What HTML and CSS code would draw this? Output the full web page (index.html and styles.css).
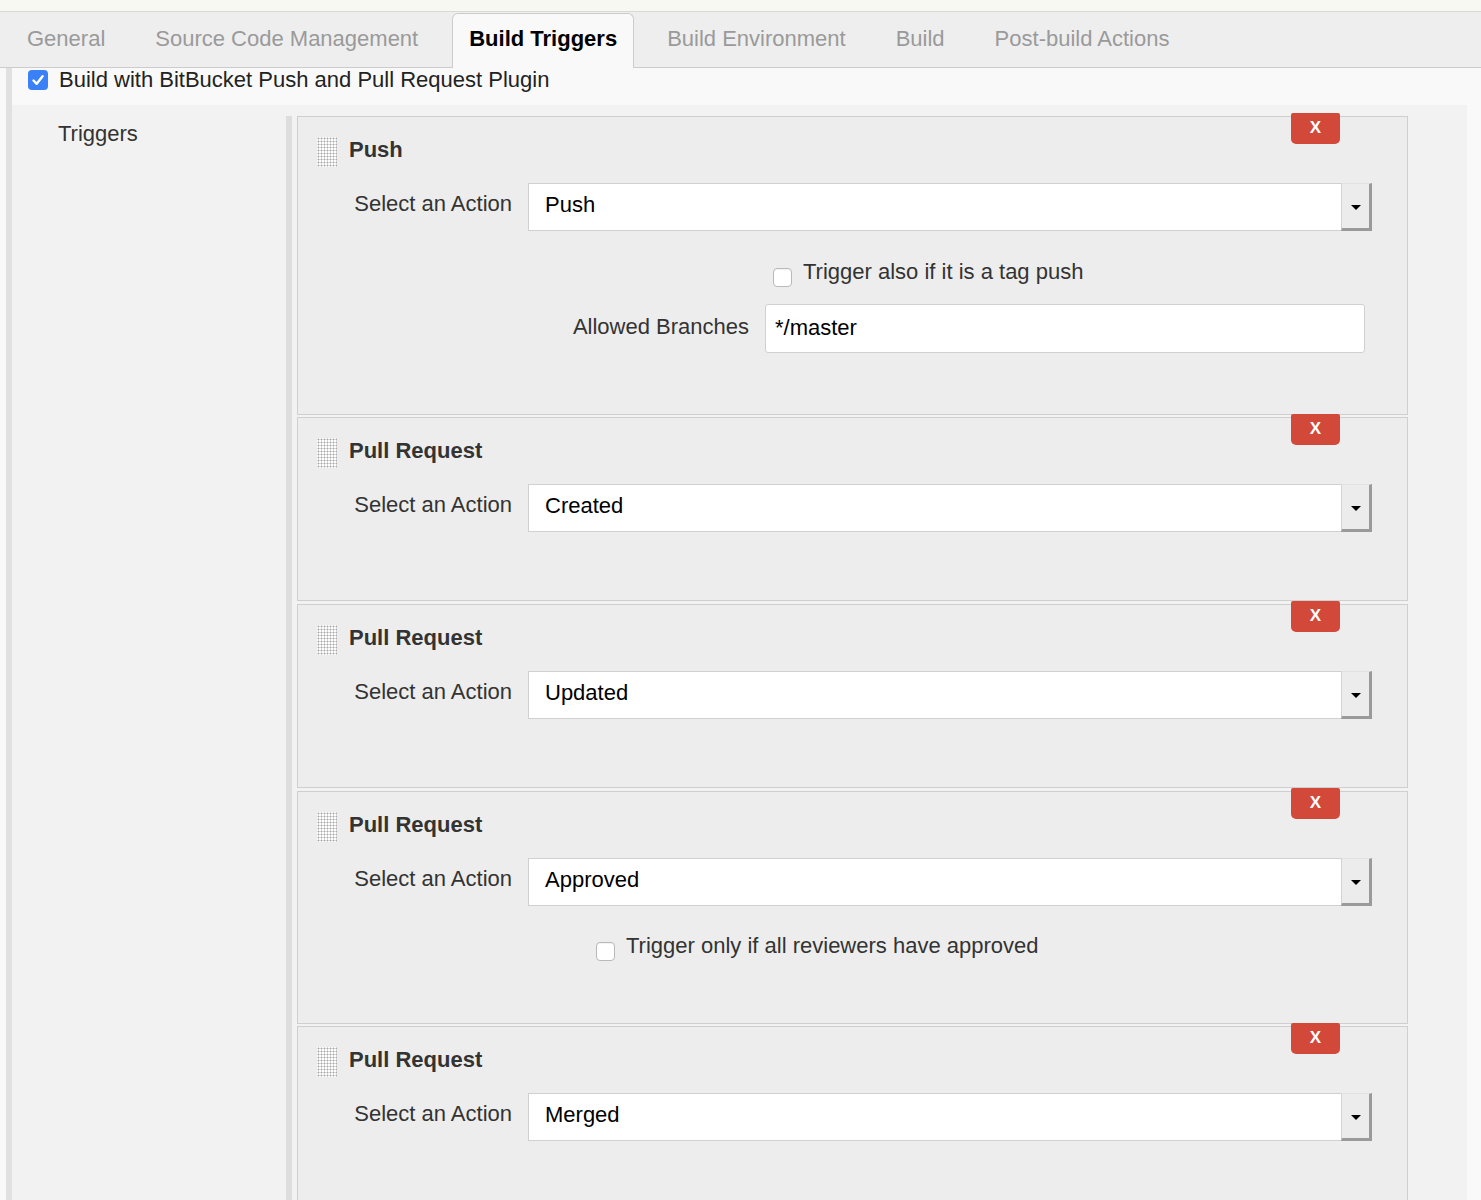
FILE: index.html
```html
<!DOCTYPE html>
<html>
<head>
<meta charset="utf-8">
<link rel="stylesheet" href="styles.css">
</head>
<body>
<div class="topstrip"></div>
<div class="tabbar">
  <div class="tab">General</div>
  <div class="tab">Source Code Management</div>
  <div class="tab active">Build Triggers</div>
  <div class="tab">Build Environment</div>
  <div class="tab">Build</div>
  <div class="tab">Post-build Actions</div>
</div>
<div class="main">
  <div class="plugin-row">
    <span class="cb-checked"><svg width="20" height="20" viewBox="0 0 20 20"><path d="M5.5 10.5 L8.7 13.8 L14.6 6.2" fill="none" stroke="#fff" stroke-width="2.4" stroke-linecap="round" stroke-linejoin="round"/></svg></span>
    <span class="plugin-text">Build with BitBucket Push and Pull Request Plugin</span>
  </div>
  <div class="section">
    <div class="sec-label">Triggers</div>
    <div class="sec-body">

      <div class="box box-push">
        <div class="del">X</div>
        <div class="hdr"><span class="handle"></span><span class="title">Push</span></div>
        <div class="row">
          <div class="label">Select an Action</div>
          <div class="select"><span class="sel-text">Push</span><span class="sel-btn"><span class="tri"></span></span></div>
        </div>
        <div class="cbrow cbrow-push">
          <span class="cb"></span><span class="cb-text">Trigger also if it is a tag push</span>
        </div>
        <div class="row2">
          <div class="label2">Allowed Branches</div>
          <div class="input">*/master</div>
        </div>
      </div>

      <div class="box">
        <div class="del">X</div>
        <div class="hdr"><span class="handle"></span><span class="title">Pull Request</span></div>
        <div class="row">
          <div class="label">Select an Action</div>
          <div class="select"><span class="sel-text">Created</span><span class="sel-btn"><span class="tri"></span></span></div>
        </div>
      </div>

      <div class="box">
        <div class="del">X</div>
        <div class="hdr"><span class="handle"></span><span class="title">Pull Request</span></div>
        <div class="row">
          <div class="label">Select an Action</div>
          <div class="select"><span class="sel-text">Updated</span><span class="sel-btn"><span class="tri"></span></span></div>
        </div>
      </div>

      <div class="box box-approved">
        <div class="del">X</div>
        <div class="hdr"><span class="handle"></span><span class="title">Pull Request</span></div>
        <div class="row">
          <div class="label">Select an Action</div>
          <div class="select"><span class="sel-text">Approved</span><span class="sel-btn"><span class="tri"></span></span></div>
        </div>
        <div class="cbrow cbrow-approved">
          <span class="cb"></span><span class="cb-text">Trigger only if all reviewers have approved</span>
        </div>
      </div>

      <div class="box">
        <div class="del">X</div>
        <div class="hdr"><span class="handle"></span><span class="title">Pull Request</span></div>
        <div class="row">
          <div class="label">Select an Action</div>
          <div class="select"><span class="sel-text">Merged</span><span class="sel-btn"><span class="tri"></span></span></div>
        </div>
      </div>

    </div>
  </div>
</div>
</body>
</html>
```

FILE: styles.css
```css
* { box-sizing: border-box; }
html, body {
  margin: 0;
  padding: 0;
  background: #f9f9f9;
  font-family: "Liberation Sans", Arial, Helvetica, sans-serif;
  font-size: 22px;
  color: #333;
  overflow: hidden;
}
.topstrip {
  height: 12px;
  background: #f6f8f1;
  border-bottom: 1px solid #d9d9d9;
}
.tabbar {
  display: flex;
  align-items: flex-end;
  height: 56px;
  background: #eeeeee;
  border-bottom: 1px solid #cccccc;
  padding-left: 10px;
}
.tab {
  height: 55px;
  line-height: 53px;
  padding: 0 17px;
  margin-right: 16px;
  color: #9a9a9a;
  font-size: 22px;
  white-space: nowrap;
}
.tab.active {
  height: 55px;
  line-height: 49px;
  padding: 0 16px;
  margin-left: 1px;
  margin-bottom: -1px;
  background: #f9f9f9;
  border: 1px solid #cccccc;
  border-bottom: none;
  border-radius: 6px 6px 0 0;
  color: #000;
  font-weight: bold;
}
.main {
  margin-left: 6px;
  border-left: 6px solid #e1e1e1;
  min-height: 1200px;
}
.plugin-row {
  display: flex;
  align-items: flex-start;
  height: 37px;
  padding-left: 16px;
}
.cb-checked {
  display: block;
  width: 20px;
  height: 20px;
  margin-top: 2px;
  border-radius: 4px;
  background: #3a80f6;
}
.cb-checked svg { display: block; }
.plugin-text {
  margin-left: 11px;
  color: #222;
  line-height: 24px;
}
.section {
  display: flex;
  background: #f2f2f2;
  margin-right: 14px;
  padding-top: 11px;
  min-height: 1100px;
}
.sec-label {
  width: 274px;
  flex: none;
  padding-left: 46px;
  padding-top: 6px;
  line-height: 24px;
  color: #333;
}
.sec-body {
  flex: 1;
  border-left: 6px solid #dddddd;
  padding-left: 5px;
  padding-right: 59px;
}
.box {
  position: relative;
  border: 1px solid #cfcfcf;
  background: #ededed;
  padding: 20px 0 68px 0;
  margin-bottom: 3px;
}
.box-push { padding-bottom: 61px; margin-bottom: 2px; }
.box-approved { padding-bottom: 62px; margin-bottom: 2px; }
.del {
  position: absolute;
  top: -4px;
  right: 67px;
  width: 49px;
  height: 31px;
  background: #d24939;
  border-radius: 2px 2px 5px 5px;
  color: #fff;
  font-weight: bold;
  font-size: 17px;
  line-height: 29px;
  text-align: center;
}
.hdr {
  display: flex;
  align-items: center;
  height: 30px;
  padding-left: 19px;
}
.handle {
  display: block;
  width: 20px;
  height: 30px;
  background-color: #fdfdfd;
  background-image: radial-gradient(circle at 1.5px 1.5px, #aaaaaa 0.85px, transparent 1.15px);
  background-size: 3px 3px;
}
.title {
  margin-left: 12px;
  margin-top: -4px;
  font-weight: bold;
  color: #333;
  line-height: 26px;
}
.row {
  display: flex;
  margin-top: 16px;
}
.label {
  width: 230px;
  flex: none;
  padding-right: 16px;
  padding-top: 9px;
  text-align: right;
  line-height: 24px;
  white-space: nowrap;
}
.select {
  display: flex;
  width: 844px;
  height: 48px;
  background: #fff;
  border: 1px solid #d0d0d0;
  border-right: none;
}
.sel-text {
  flex: 1;
  padding-left: 16px;
  line-height: 42px;
  color: #000;
}
.sel-btn {
  display: flex;
  align-items: center;
  justify-content: center;
  width: 31px;
  height: 48px;
  margin-top: -1px;
  background: #ececec;
  border-left: 1px solid #d2d2d2;
  border-top: 1px solid #e2e2e2;
  border-right: 3px solid #9a9a9a;
  border-bottom: 3px solid #9a9a9a;
}
.tri {
  display: block;
  width: 0;
  height: 0;
  border-left: 5px solid transparent;
  border-right: 5px solid transparent;
  border-top: 5px solid #000;
  margin-top: 2px;
}
.cbrow {
  display: flex;
  line-height: 24px;
}
.cbrow-push { margin-top: 29px; padding-left: 475px; }
.cbrow-approved { margin-top: 28px; padding-left: 298px; }
.cb {
  display: block;
  flex: none;
  width: 19px;
  height: 19px;
  margin-top: 8px;
  background: #fff;
  border: 1px solid #b9b9b9;
  border-radius: 4px;
  box-shadow: inset 0 1px 1px rgba(0,0,0,0.05);
}
.cb-text {
  margin-left: 11px;
  color: #333;
}
.row2 {
  display: flex;
  align-items: center;
  margin-top: 17px;
}
.label2 {
  width: 467px;
  flex: none;
  padding-right: 16px;
  padding-bottom: 4px;
  text-align: right;
  line-height: 24px;
  white-space: nowrap;
}
.input {
  width: 600px;
  height: 49px;
  background: #fff;
  border: 1px solid #d0d0d0;
  border-radius: 3px;
  padding-left: 9px;
  line-height: 45px;
  color: #000;
}
```
